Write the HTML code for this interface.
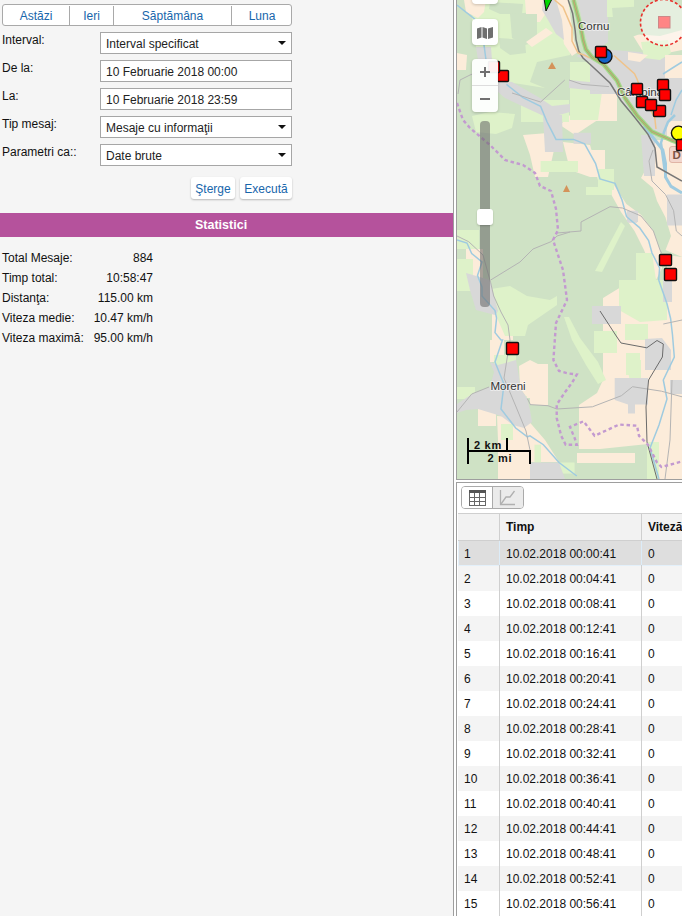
<!DOCTYPE html>
<html><head><meta charset="utf-8">
<style>
*{box-sizing:border-box;margin:0;padding:0}
html,body{width:682px;height:916px;overflow:hidden;background:#f5f5f5;font-family:"Liberation Sans",sans-serif;font-size:12px;color:#111;position:relative}
.a{position:absolute;white-space:nowrap;line-height:14px}
.grp{position:absolute;left:2px;top:4px;width:290px;height:22px;border:1px solid #a9a9a9;border-radius:3px;background:#fff}
.grp span{position:absolute;top:1px;height:20px;line-height:20px;text-align:center;color:#1766ab;border-right:1px solid #a9a9a9}
.fld{position:absolute;left:100px;width:192px;height:22px;border:1px solid #a6a6a6;background:#fff}
.fld span{position:absolute;left:5px;top:4px;line-height:14px;color:#222}
.arr{position:absolute;left:177px;top:8px;width:0;height:0;border-left:4px solid transparent;border-right:4px solid transparent;border-top:4px solid #111}
.btn{position:absolute;top:177px;height:22px;background:#fff;border-radius:3px;box-shadow:0 1px 2px rgba(0,0,0,.25);color:#1766ab;line-height:24px;text-align:center}
.bar{position:absolute;left:0;top:213px;width:453px;height:24px;background:#b5529c;color:#fff;font-weight:bold;line-height:25px;font-size:12.5px}
.lab{left:2px}
.val{text-align:right;width:100px;left:53px}
#sep{position:absolute;left:453px;top:0;width:1px;height:916px;background:#9e9e9e}
#sepw{position:absolute;left:454px;top:0;width:2px;height:916px;background:#fff}
#map{position:absolute;left:456px;top:0;width:226px;height:480px;border-left:1px solid #9e9e9e;border-bottom:1px solid #9e9e9e;background:#d0e2c6;overflow:hidden}
#gap{position:absolute;left:456px;top:480px;width:226px;height:2px;background:#fff}
#tp{position:absolute;left:456px;top:482px;width:226px;height:434px;border-left:1px solid #9e9e9e;border-top:1px solid #9e9e9e;background:#fff;overflow:hidden}
.tb{position:absolute;left:4px;top:3px;width:63px;height:23px;border:1px solid #aaa;border-radius:4px;overflow:hidden;background:#fff}
.tb1{position:absolute;left:0;top:0;width:31px;height:21px;border-right:1px solid #aaa;background:#fff}
.tb2{position:absolute;left:31px;top:0;width:31px;height:21px;background:#ebebeb}
.th{position:absolute;left:1px;width:230px;height:28px;background:#f2f2f2;border-top:1px solid #cfcfcf;border-bottom:1px solid #cfcfcf;font-weight:bold;color:#111}
.th span,.tr span{position:absolute;top:6px;line-height:14px;white-space:nowrap}
.th i,.tr i{position:absolute;top:-1px;bottom:-1px;width:1px;background:#cfcfcf}
.tr{position:absolute;left:1px;width:230px;height:25px;background:#fff;color:#111}
.tr span{top:6px}
.tr.ev{background:#f4f4f4}
.tr.sel{background:#dedede;box-shadow:inset 1px -1px 0 #e3f0fa}
.tr.sel i{background:#dcecf8;top:0;bottom:0}
</style></head><body>
<div class="grp">
 <span style="left:0;width:67px">Astăzi</span>
 <span style="left:67px;width:44px">Ieri</span>
 <span style="left:111px;width:118px">Săptămâna</span>
 <span style="left:229px;width:60px;border-right:0">Luna</span>
</div>
<div class="a lab" style="top:33px">Interval:</div>
<div class="a lab" style="top:61px">De la:</div>
<div class="a lab" style="top:89px">La:</div>
<div class="a lab" style="top:117px">Tip mesaj:</div>
<div class="a lab" style="top:145px">Parametri ca::</div>
<div class="fld" style="top:32px"><span>Interval specificat</span><i class="arr"></i></div>
<div class="fld" style="top:60px"><span>10 Februarie 2018 00:00</span></div>
<div class="fld" style="top:88px"><span>10 Februarie 2018 23:59</span></div>
<div class="fld" style="top:116px"><span>Mesaje cu informaţii</span><i class="arr"></i></div>
<div class="fld" style="top:144px"><span>Date brute</span><i class="arr"></i></div>
<div class="btn" style="left:191px;width:44px">Şterge</div>
<div class="btn" style="left:240px;width:52px">Execută</div>
<div class="bar"><span style="position:absolute;left:195px">Statistici</span></div>
<div class="a lab" style="top:251px">Total Mesaje:</div><div class="a val" style="top:251px">884</div>
<div class="a lab" style="top:271px">Timp total:</div><div class="a val" style="top:271px">10:58:47</div>
<div class="a lab" style="top:291px">Distanţa:</div><div class="a val" style="top:291px">115.00 km</div>
<div class="a lab" style="top:311px">Viteza medie:</div><div class="a val" style="top:311px">10.47 km/h</div>
<div class="a lab" style="top:331px">Viteza maximă:</div><div class="a val" style="top:331px">95.00 km/h</div>
<div id="sep"></div><div id="sepw"></div>
<div id="map">
<svg width="225" height="479" viewBox="457 0 225 479" style="position:absolute;left:0;top:0">
<rect x="457" y="0" width="225" height="479" fill="#cfe2c5"/>
<!-- beige big -->
<g fill="#fcecda">


<path d="M590 94L617 94L617 121L590 121Z"/>
<path d="M667 121L682 121L682 140L667 140Z"/>
<path d="M560 125L585 100L613 95L610 112L590 125L575 135Z"/>
<path d="M523 135L548 133L554 150L548 177L535 177L530 155Z"/>
<path d="M563 142L590 145L596 165L590 177L570 170Z"/>
<path d="M590 150L605 150L605 177L590 177Z"/>
<path d="M596 172L614 185L626.4 204L641 214.8L653.4 231L660 250L662 268L656 280L644 250L634.5 231L621 212L609 190.5L598 180Z"/>
<path d="M648 140L682 140L682 257L665.5 250L671 236L665.5 217.5L657 201L653 188L641 178L648 165Z"/>
<path d="M667 255L682 257L682 479L650 479L648 444L600 449L579 449L579 405L597 393L603 380L603 298L621 287L640 280L667 280Z"/>
<path d="M530 364L548 364L548 405L530 405Z"/>
<path d="M577 453L635 453L635 463L577 463Z"/>
<path d="M466 249L483 249L483 280L466 280Z"/>
<path d="M492 306L513 306L513 340L492 340Z"/>
<path d="M490 340L504 340L504 362L490 362Z"/>
<path d="M478 406L496 406L496 426L478 426Z"/>
<path d="M519 366L530 360L542 366L546 398L527 398L520 388Z"/>
<path d="M497 416L526 418L545 440L559 462L530 462L530 479L498 479L498 440Z"/>
</g>
<!-- light green -->
<g fill="#def2c9">
<path d="M474 0L570 0L570 85L545 88L520 84L498 81L490 60L476 47L472 20Z"/>
<path d="M570 62L598 62L603 85L598 120L570 120Z"/>



<path d="M472 116L490 112L515 114L512 128L496 134L476 132Z"/>
<path d="M521 100L569 100L569 122L521 122Z"/>
<path d="M598 169L614 169L614 190L598 190Z"/>
<path d="M590 189L610 189L610 194L590 194Z"/>
<path d="M540.6 161L578 161L578 172L540.6 172Z"/>

<path d="M586 187L612 187L612 195L586 195Z"/>
<path d="M621 222L625 226L602 272L595 271Z"/>
<path d="M636 253L652 253L656 280L636 280Z"/>
<path d="M457 230L479 230L479 249L457 249Z"/>
<path d="M457 259L473 259L473 291L457 291Z"/>
<path d="M491 289L510 286L527 296L550 300L557 296L557 305L528 325L525 336L505 336L498 320Z"/>
<path d="M457 387L475 387L475 399L457 399Z"/>
<path d="M494 355L516 355L516 366L494 366Z"/>
<path d="M516 396L527 396L527 407L516 407Z"/>
<path d="M501 424L513 424L513 440L501 440Z"/>
<path d="M564 317L569 317L580 338L598 362L606 380L598 384L586 365L572 340Z"/>
<path d="M619 280L667 280L667 320L640 322L619 310Z"/>
<path d="M594 331L617 331L617 353L594 353Z"/>
<path d="M625 324L648 324L648 340L625 340Z"/>
<path d="M626 353L640 353L640 375L626 375Z"/>

<path d="M647 442L659 442L659 479L647 479Z"/>
<path d="M534.5 444.7L541 444.7L541 462.5L534.5 462.5Z"/>
<path d="M559 462.5L574.6 462.5L574.6 473.6L559 473.6Z"/>
<path d="M626 360L641 360L641 384.5L630 382Z"/>
</g>
<!-- mid-green patches over light green -->
<g fill="#cfe2c5">
<path d="M490 2L523 4L522 14L500 14L489 9Z"/>
<path d="M510 14L537 12L537 42L525 45L512 38Z"/>
<path d="M499 38L525 40L526 53L510 55L500 48Z"/>
<path d="M537 62L570 55L570 88L545 88L530 82Z"/>

</g>
<!-- beige small -->
<g fill="#fcecda">
<path d="M464 0L486 0L484 12L478 18L466 12Z"/>
<path d="M525 0L537 0L537 14L526 14Z"/>
<path d="M526 42L546 28L553 33L532 47Z"/>
<path d="M537 0L545 0L548 10L540 22L537 22Z"/>
<path d="M556 0L568 0L574 40L578 52L572 56L564 44L560 20Z"/>
<path d="M457 53L467 55L466 70L457 70Z"/>
</g>

<!-- gray urban -->
<g fill="#d8d8d8">
<path d="M543 0L556 0L562 20L564 40L556 34L548 20L542 10Z"/>
<path d="M578 0L608 0L608 42L600 48L590 50L584 30Z"/>
<path d="M600 48L612 50L640 52L682 62L682 121L667 121L667 140L644 128L625 105L617 94L590 94L590 62L576 56Z"/>
<path d="M632 34L660 36L682 30L682 50L662 54L642 50Z" fill="#fcecda"/>
<path d="M641 42L668 40L671 53L660 60L644 58Z" fill="#def2c9"/>
<path d="M628 52L648 55L640 62L628 60Z" fill="#fcecda"/>
<path d="M665 55L682 55L682 78L665 78Z" fill="#fcecda"/>
<path d="M607 0L634 0L634 17L607 17Z" fill="#def2c9"/>
<path d="M612 8L648 6L650 30L632 37L614 28Z" fill="#cfe2c5"/>
<path d="M476 47L491 47L492 60L478 60Z"/>
<path d="M498 80L512 82L540 98L552 106L570 104L570 112L548 118L535 112L505 98L498 92Z"/>
<path d="M569 80L609 84L609 92L569 88Z"/>
<path d="M543 115L562 115L563 152L545 152Z"/>
<path d="M573.6 132.8L591 132.8L591 143.8L573.6 143.8Z"/>
<path d="M644 150L653 150L653 170L644 170Z"/>
<path d="M628 210.7L637 210.7L637 222.8L628 222.8Z"/>
<path d="M641 135L655 135L655 176L644 176Z"/>
<path d="M627 211L638 211L638 222L627 222Z"/>
<path d="M667 194.5L682 194.5L682 225.5L667 225.5Z"/>
<path d="M466 273L490 280L498 311L495 315L476 310L470 290Z"/>
<path d="M592 306L621 306L621 324L592 324Z"/>
<path d="M645 339L662 338L671 350L671 370L645 370Z"/>
<path d="M663 280L672 280L672 302L663 302Z"/>
<path d="M490 362L498 365L516 360L519 377L520 388L527 398L530 410L532 422L524 428L513 425L501 416L478 409L466 410L457 413L457 404L472 394L490 387L494 372Z"/>
<path d="M614.7 378L648 378L648 404.6L635 404.6L635 413.5L628 413.5L628 404.6L614.7 400Z"/>
<path d="M530 462.5L559 462.5L565 479L530 479Z"/>
<path d="M670 380L682 380L682 394L670 394Z"/>
</g>
<!-- rivers -->
<g fill="none" stroke="#9fcbe0" stroke-width="1.5">
<path d="M457 5L474.6 19L480 30L484 45L486 60"/>
<path d="M506.5 84.4L523 97.6L540.6 106.4L547 121.8L556 139.4L573.6 139.4L584.6 143.8L595.6 163.6L600 179L615 183.4L622 200L626.6 216.7L639.5 227.6L648.6 240.5L652 253L659.6 268L658.7 280"/>
<path d="M658.7 280L667 303.8L670.6 318.5L672.5 335L674.3 357L663.3 380L667 399L659 425L650 448L659 479"/>
<path d="M457 240L467 243L471.7 253.5L482 262L477.5 275.5L482 287L482 296L495 310.6L496.6 318L495 332.6L501 340L502.5 340L495 362L504 384L501 409L515.7 428L527.4 436.8L530 435.8L543.4 444.7L559 462.5L576.8 476"/>
<path d="M644 126L662.8 150L665.5 163.5L665.5 177L671 186.4L682 193" stroke-width="3"/>
<path d="M663 74L674 67L682 62"/>
<path d="M675 115L668 122L664 132L661 143L664.6 170" stroke-width="2.5"/>
<path d="M671 115L676 100L682 90"/>
</g>
<!-- gray roads -->
<g fill="none" stroke="#b4b4b4" stroke-width="1">
<path d="M458 94L460 80L470 75L475 73"/>
<path d="M512 93L540.6 102L564.8 80"/>
<path d="M569 80L582 84.4L609 86.6"/>
<path d="M490.7 280L520 262L533 249L551 241.7L557 236L570 232"/>
<path d="M557 233L581 231L581 222L610 206.7L622.4 208L641 216L653.4 231L660 250L661.5 253"/>
<path d="M653 150L649 161L652 181L665.5 194.5L673.6 210.7L676.3 231L682 236"/>
<path d="M530 404.6L548 405.7L556.7 409L592.4 406.8L621.4 395.7L632.5 386.7L661.5 391.2L682 396.8"/>
<path d="M457 236L468.7 241.7L483 255L490.7 282.8L493.7 296L501 312L508 325L510 340L504 378L515.7 406L526 431L530 450"/>
<path d="M457 412L471.7 394L489 387"/>
<path d="M527.4 398.7L530.3 404.5"/>
<path d="M663.3 324L682 320"/>
<path d="M672 380L670 440L665 479"/>
</g>
<!-- black line -->
<g fill="none" stroke="#6b6b6b" stroke-width="1">
<path d="M600 311L615.6 335L621 343L646.8 347.8L657 340.5L663.3 344L662.4 357L648.6 380L646 407L647 442L657 479"/>
</g>
<path d="M568.2 0L572.6 13.2L575.2 30.8L576 39.6L578.7 51L583 58L590 64.3L610 83L621 100.7L634.5 117L648 134.4L655 148L657 167L682 181" fill="none" stroke="#777" stroke-width="1.5"/>
<!-- orange roads -->
<g fill="none" stroke="#f0c38a" stroke-width="1.5">
<path d="M554.6 0L563 7L572 28L572 41L578 53L584 55L590 58"/>
<path d="M614 55.5L634.5 73.7L637 79L645 100L654.8 118L656 129"/>
</g>
<!-- main road -->
<path d="M573.5 0L577 13.2L580.5 26.4L583 39.6L585.8 49.3L592 57.2L603.5 64.3L617 80.5L625 98L637 115.5L652 131.7L671 140L682 144" fill="none" stroke="#a9d88f" stroke-width="4.6" stroke-linejoin="round"/>
<path d="M573.5 0L577 13.2L580.5 26.4L583 39.6L585.8 49.3L592 57.2L603.5 64.3L617 80.5L625 98L637 115.5L652 131.7L671 140L682 144" fill="none" stroke="#8dc46f" stroke-width="2.4" stroke-linejoin="round"/>
<path d="M573.5 0L577 13.2L580.5 26.4L583 39.6L585.8 49.3L592 57.2L603.5 64.3L617 80.5L625 98L637 115.5L652 131.7L671 140L682 144" fill="none" stroke="#d39f76" stroke-width="0.9"/>
<!-- purple dashed boundary -->
<g fill="none" stroke="#c39ad0" stroke-width="2.4" stroke-dasharray="3.5 2.8">
<path d="M457 103L463 120L470 128L490 145L505 160L523 165L535 173L540 186L551 191L556 209L558 230L553 240L563 270L567 300L556 323L553.4 360L559 371L568 373.4L576.8 374.5L572.3 382.3L565.7 391.2L556.7 404.6L556.7 418L561.2 435.8L565.7 444.7L576.8 444.7L574.6 438L570 426.9L583.5 421.3L594.6 435.8L619 424.6L637 425.7L639 435.8L648 444.7L657 462.5L661.5 467L682 461.4"/>
</g>
<!-- peaks -->
<g fill="#d4935a">
<path d="M548 69L552 62L556 69Z"/>
<path d="M563 192L566.5 185L570 192Z"/>
</g>
</svg>
<svg width="225" height="479" viewBox="457 0 225 479" style="position:absolute;left:0;top:0">
<!-- labels -->
<g font-family="Liberation Sans" font-size="11.5" fill="#333" stroke="#fff" stroke-width="2" stroke-opacity=".5" paint-order="stroke">
<text x="578" y="30">Cornu</text>
<text x="617" y="96">Câmpina</text>
<text x="490.5" y="389.5">Moreni</text>
</g>
<rect x="669.5" y="146.5" width="20" height="16" rx="2.5" fill="#f2d6cd" stroke="#e0b4a6"/>
<text x="672.5" y="159" font-family="Liberation Sans" font-size="11.5" font-weight="bold" fill="#7a5446">D</text>
<!-- dashed circle -->
<circle cx="663.5" cy="22.5" r="23" fill="#ffffff" fill-opacity=".45" stroke="#e8302c" stroke-width="1.6" stroke-dasharray="3 2.2"/>
<rect x="658.5" y="16.5" width="11.5" height="11.5" fill="#ff8585" stroke="#c88" stroke-width="1"/>
<!-- green triangle -->
<path d="M544 -2L552.5 -2L546 11Z" fill="#00d800" stroke="#111" stroke-width="1"/>
<!-- markers -->
<g stroke="#111" stroke-width="1.4" fill="#ff0000">
<circle cx="604.8" cy="56.2" r="7.2" fill="#1565c8"/>
<rect x="595.5" y="46.5" width="11" height="11" rx="1"/>
<rect x="497.5" y="70.5" width="11" height="11" rx="1"/>
<rect x="488.5" y="61.5" width="11" height="11" rx="1"/>
<rect x="631.5" y="83.5" width="11" height="11" rx="1"/>
<rect x="657.5" y="79.5" width="11" height="11" rx="1"/>
<rect x="659.5" y="89.5" width="11" height="11" rx="1"/>
<rect x="636.5" y="96.5" width="11" height="11" rx="1"/>
<rect x="653.5" y="105.5" width="12" height="11" rx="1"/>
<rect x="645.5" y="99.5" width="11" height="11" rx="1"/>
<circle cx="678.4" cy="133.1" r="7" fill="#ffff00"/>
<rect x="676.5" y="139.5" width="11" height="11" rx="1"/>
<rect x="659.5" y="254.5" width="12" height="11" rx="1"/>
<rect x="664.5" y="268.5" width="12" height="12" rx="1"/>
<rect x="506.5" y="342.5" width="12" height="12" rx="1"/>
</g>
<!-- scale bar -->
<g fill="none" stroke="#000" stroke-width="2">
<path d="M468 438V464M468 451H531M507 438V451M530 451V464"/>
</g>
<g font-family="Liberation Sans" font-size="11" font-weight="bold" fill="#111" letter-spacing="0.7">
<text x="474" y="448.5">2 km</text>
<text x="487.5" y="462">2 mi</text>
</g>
</svg>
<div style="position:absolute;left:15px;top:-22px;width:26px;height:26px;background:#fff;border-radius:4px;box-shadow:0 1px 3px rgba(0,0,0,.2)"></div>
<div style="position:absolute;left:15px;top:19px;width:26px;height:26px;background:#fff;border-radius:4px;box-shadow:0 1px 3px rgba(0,0,0,.2)"><svg width="16" height="12" viewBox="0 0 16 12" style="position:absolute;left:5px;top:8px"><path d="M0 1.5L4.5 0V10.5L0 12Z M5.5 0L10 1.5V12L5.5 10.5Z M11 1.5L16 0V10.5L11 12Z" fill="#6f6f6f"/></svg></div>
<div style="position:absolute;left:15px;top:59px;width:26px;height:53px;background:rgba(255,255,255,.94);border-radius:4px;box-shadow:0 1px 3px rgba(0,0,0,.2)">
<div style="position:absolute;left:0;top:26px;width:26px;height:1px;background:#ddd"></div>
<div style="position:absolute;left:8px;top:12px;width:10px;height:2px;background:#707070"></div>
<div style="position:absolute;left:12px;top:8px;width:2px;height:10px;background:#707070"></div>
<div style="position:absolute;left:8px;top:39px;width:10px;height:2px;background:#707070"></div>
</div>
<div style="position:absolute;left:23px;top:121px;width:10px;height:186px;background:rgba(100,100,100,.55);border-radius:4px"></div>
<div style="position:absolute;left:20px;top:209px;width:16px;height:16px;background:#fff;border-radius:3px;box-shadow:0 1px 2px rgba(0,0,0,.2)"></div>
</div>
<div id="gap"></div>
<div id="tp">
<div class="tb"><div class="tb1"><svg width="17" height="16" viewBox="0 0 17 16" style="position:absolute;left:7px;top:3px"><rect x="0.5" y="0.5" width="16" height="15" fill="#fff" stroke="#666"/><rect x="0" y="0" width="17" height="3" fill="#555"/><path d="M0 7.5H17M0 11.5H17M5.5 3V16M10.5 3V16" stroke="#666" stroke-width="1"/></svg></div><div class="tb2"><svg width="17" height="16" viewBox="0 0 17 16" style="position:absolute;left:6px;top:3px"><path d="M1.5 0V14.5H16" fill="none" stroke="#b0b0b0" stroke-width="1.3"/><path d="M2 14L7 7H11L15.5 1" fill="none" stroke="#b0b0b0" stroke-width="1.3"/></svg></div></div>
<div class="th" style="top:30px"><span style="left:48px">Timp</span><span style="left:190px">Viteză</span><i style="left:41px"></i><i style="left:183px"></i></div>
<div class="tr sel" style="top:58px"><span style="left:6px">1</span><span style="left:48px">10.02.2018 00:00:41</span><span style="left:190px">0</span><i style="left:41px"></i><i style="left:183px"></i></div>
<div class="tr ev" style="top:83px"><span style="left:6px">2</span><span style="left:48px">10.02.2018 00:04:41</span><span style="left:190px">0</span><i style="left:41px"></i><i style="left:183px"></i></div>
<div class="tr" style="top:108px"><span style="left:6px">3</span><span style="left:48px">10.02.2018 00:08:41</span><span style="left:190px">0</span><i style="left:41px"></i><i style="left:183px"></i></div>
<div class="tr ev" style="top:133px"><span style="left:6px">4</span><span style="left:48px">10.02.2018 00:12:41</span><span style="left:190px">0</span><i style="left:41px"></i><i style="left:183px"></i></div>
<div class="tr" style="top:158px"><span style="left:6px">5</span><span style="left:48px">10.02.2018 00:16:41</span><span style="left:190px">0</span><i style="left:41px"></i><i style="left:183px"></i></div>
<div class="tr ev" style="top:183px"><span style="left:6px">6</span><span style="left:48px">10.02.2018 00:20:41</span><span style="left:190px">0</span><i style="left:41px"></i><i style="left:183px"></i></div>
<div class="tr" style="top:208px"><span style="left:6px">7</span><span style="left:48px">10.02.2018 00:24:41</span><span style="left:190px">0</span><i style="left:41px"></i><i style="left:183px"></i></div>
<div class="tr ev" style="top:233px"><span style="left:6px">8</span><span style="left:48px">10.02.2018 00:28:41</span><span style="left:190px">0</span><i style="left:41px"></i><i style="left:183px"></i></div>
<div class="tr" style="top:258px"><span style="left:6px">9</span><span style="left:48px">10.02.2018 00:32:41</span><span style="left:190px">0</span><i style="left:41px"></i><i style="left:183px"></i></div>
<div class="tr ev" style="top:283px"><span style="left:6px">10</span><span style="left:48px">10.02.2018 00:36:41</span><span style="left:190px">0</span><i style="left:41px"></i><i style="left:183px"></i></div>
<div class="tr" style="top:308px"><span style="left:6px">11</span><span style="left:48px">10.02.2018 00:40:41</span><span style="left:190px">0</span><i style="left:41px"></i><i style="left:183px"></i></div>
<div class="tr ev" style="top:333px"><span style="left:6px">12</span><span style="left:48px">10.02.2018 00:44:41</span><span style="left:190px">0</span><i style="left:41px"></i><i style="left:183px"></i></div>
<div class="tr" style="top:358px"><span style="left:6px">13</span><span style="left:48px">10.02.2018 00:48:41</span><span style="left:190px">0</span><i style="left:41px"></i><i style="left:183px"></i></div>
<div class="tr ev" style="top:383px"><span style="left:6px">14</span><span style="left:48px">10.02.2018 00:52:41</span><span style="left:190px">0</span><i style="left:41px"></i><i style="left:183px"></i></div>
<div class="tr" style="top:408px"><span style="left:6px">15</span><span style="left:48px">10.02.2018 00:56:41</span><span style="left:190px">0</span><i style="left:41px"></i><i style="left:183px"></i></div>
</div>
</body></html>
